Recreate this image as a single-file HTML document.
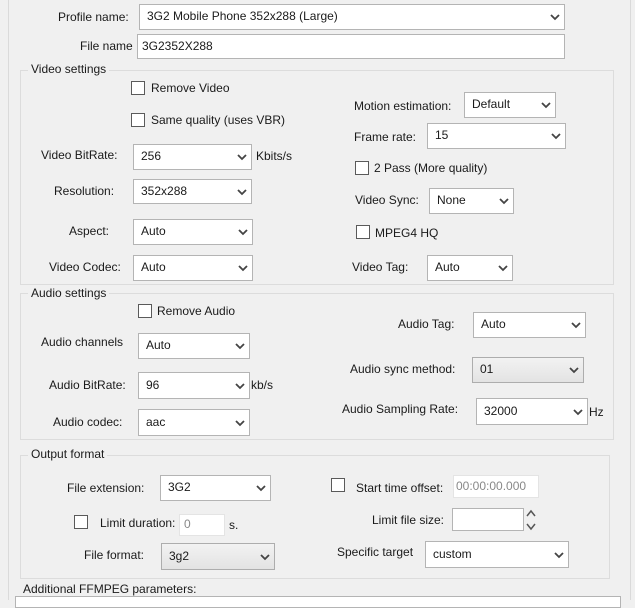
<!DOCTYPE html>
<html><head><style>
body{margin:0;width:635px;height:600px;background:#f0f0f0;font-family:"Liberation Sans",sans-serif;font-size:12px;color:#1a1a1a;position:relative;overflow:hidden}
.a{position:absolute;white-space:nowrap;line-height:14px}
.dd,.in{position:absolute;background:#fff;border:1px solid #b4b4b4;box-sizing:border-box;line-height:14px}
.dd span,.in span{position:absolute;left:7px;top:50%;margin-top:-8px}
.dd svg{position:absolute;right:4px;top:50%;margin-top:-3px}
.g{background:linear-gradient(#f2f2f2,#e3e3e3);border-color:#adadad}
.cb{position:absolute;width:14px;height:14px;border:1px solid #5a5a5a;background:#fff;box-sizing:border-box}
.box{position:absolute;border:1px solid #dcdcdc;box-sizing:border-box}
.lab{position:absolute;background:#f0f0f0;padding:0 3px;line-height:14px}
</style></head><body>
<div style="position:absolute;left:8px;top:0;width:621px;height:600px;border-left:1px solid #dadada;border-right:1px solid #dadada"></div>

<div class="a" style="left:58px;top:10px">Profile name:</div>
<div class="dd" style="left:139px;top:4px;width:426px;height:26px"><span>3G2 Mobile Phone 352x288 (Large)</span><svg width="10" height="7"><path d="M1 1L5 5L9 1" stroke="#444" stroke-width="1.8" fill="none"/></svg></div>
<div class="a" style="left:80px;top:39px">File name</div>
<div class="in" style="left:137px;top:34px;width:428px;height:25px"><span style="left:4px">3G2352X288</span></div>

<div class="box" style="left:20px;top:70px;width:594px;height:215px"></div>
<div class="lab" style="left:28px;top:62px">Video settings</div>
<div class="cb" style="left:131px;top:81px"></div><div class="a" style="left:151px;top:81px">Remove Video</div>
<div class="cb" style="left:131px;top:113px"></div><div class="a" style="left:151px;top:113px">Same quality (uses VBR)</div>
<div class="a" style="left:41px;top:148px">Video BitRate:</div>
<div class="dd" style="left:133px;top:144px;width:119px;height:26px"><span>256</span><svg width="10" height="7"><path d="M1 1L5 5L9 1" stroke="#444" stroke-width="1.8" fill="none"/></svg></div>
<div class="a" style="left:256px;top:149px">Kbits/s</div>
<div class="a" style="left:54px;top:184px">Resolution:</div>
<div class="dd" style="left:133px;top:179px;width:119px;height:25px"><span>352x288</span><svg width="10" height="7"><path d="M1 1L5 5L9 1" stroke="#444" stroke-width="1.8" fill="none"/></svg></div>
<div class="a" style="left:69px;top:224px">Aspect:</div>
<div class="dd" style="left:133px;top:219px;width:120px;height:26px"><span>Auto</span><svg width="10" height="7"><path d="M1 1L5 5L9 1" stroke="#444" stroke-width="1.8" fill="none"/></svg></div>
<div class="a" style="left:49px;top:260px">Video Codec:</div>
<div class="dd" style="left:133px;top:255px;width:120px;height:26px"><span>Auto</span><svg width="10" height="7"><path d="M1 1L5 5L9 1" stroke="#444" stroke-width="1.8" fill="none"/></svg></div>

<div class="a" style="left:354px;top:99px">Motion estimation:</div>
<div class="dd" style="left:464px;top:92px;width:92px;height:26px"><span>Default</span><svg width="10" height="7"><path d="M1 1L5 5L9 1" stroke="#444" stroke-width="1.8" fill="none"/></svg></div>
<div class="a" style="left:354px;top:130px">Frame rate:</div>
<div class="dd" style="left:427px;top:123px;width:139px;height:26px"><span>15</span><svg width="10" height="7"><path d="M1 1L5 5L9 1" stroke="#444" stroke-width="1.8" fill="none"/></svg></div>
<div class="cb" style="left:355px;top:161px"></div><div class="a" style="left:374px;top:161px">2 Pass (More quality)</div>
<div class="a" style="left:355px;top:193px">Video Sync:</div>
<div class="dd" style="left:429px;top:188px;width:85px;height:26px"><span>None</span><svg width="10" height="7"><path d="M1 1L5 5L9 1" stroke="#444" stroke-width="1.8" fill="none"/></svg></div>
<div class="cb" style="left:356px;top:225px"></div><div class="a" style="left:375px;top:226px">MPEG4 HQ</div>
<div class="a" style="left:352px;top:260px">Video Tag:</div>
<div class="dd" style="left:427px;top:255px;width:86px;height:26px"><span>Auto</span><svg width="10" height="7"><path d="M1 1L5 5L9 1" stroke="#444" stroke-width="1.8" fill="none"/></svg></div>

<div class="box" style="left:20px;top:293px;width:594px;height:147px"></div>
<div class="lab" style="left:28px;top:286px">Audio settings</div>
<div class="cb" style="left:138px;top:304px"></div><div class="a" style="left:157px;top:304px">Remove Audio</div>
<div class="a" style="left:41px;top:335px">Audio channels</div>
<div class="dd" style="left:138px;top:333px;width:112px;height:26px"><span>Auto</span><svg width="10" height="7"><path d="M1 1L5 5L9 1" stroke="#444" stroke-width="1.8" fill="none"/></svg></div>
<div class="a" style="left:49px;top:378px">Audio BitRate:</div>
<div class="dd" style="left:138px;top:372px;width:112px;height:27px"><span>96</span><svg width="10" height="7"><path d="M1 1L5 5L9 1" stroke="#444" stroke-width="1.8" fill="none"/></svg></div>
<div class="a" style="left:251px;top:378px">kb/s</div>
<div class="a" style="left:53px;top:415px">Audio codec:</div>
<div class="dd" style="left:138px;top:409px;width:112px;height:27px"><span>aac</span><svg width="10" height="7"><path d="M1 1L5 5L9 1" stroke="#444" stroke-width="1.8" fill="none"/></svg></div>
<div class="a" style="left:398px;top:317px">Audio Tag:</div>
<div class="dd" style="left:473px;top:312px;width:113px;height:26px"><span>Auto</span><svg width="10" height="7"><path d="M1 1L5 5L9 1" stroke="#444" stroke-width="1.8" fill="none"/></svg></div>
<div class="a" style="left:350px;top:362px">Audio sync method:</div>
<div class="dd g" style="left:472px;top:357px;width:112px;height:26px"><span>01</span><svg width="10" height="7"><path d="M1 1L5 5L9 1" stroke="#444" stroke-width="1.8" fill="none"/></svg></div>
<div class="a" style="left:342px;top:402px">Audio Sampling Rate:</div>
<div class="dd" style="left:476px;top:398px;width:112px;height:27px"><span>32000</span><svg width="10" height="7"><path d="M1 1L5 5L9 1" stroke="#444" stroke-width="1.8" fill="none"/></svg></div>
<div class="a" style="left:589px;top:405px">Hz</div>

<div class="box" style="left:20px;top:455px;width:590px;height:124px"></div>
<div class="lab" style="left:28px;top:447px">Output format</div>
<div class="a" style="left:67px;top:481px">File extension:</div>
<div class="dd" style="left:160px;top:475px;width:111px;height:26px"><span>3G2</span><svg width="10" height="7"><path d="M1 1L5 5L9 1" stroke="#444" stroke-width="1.8" fill="none"/></svg></div>
<div class="cb" style="left:74px;top:515px"></div><div class="a" style="left:100px;top:516px">Limit duration:</div>
<div class="in" style="left:179px;top:514px;width:46px;height:22px;border-color:#e4e4e4"><span style="left:4px;color:#888">0</span></div>
<div class="a" style="left:229px;top:518px">s.</div>
<div class="a" style="left:84px;top:548px">File format:</div>
<div class="dd g" style="left:161px;top:543px;width:114px;height:27px"><span>3g2</span><svg width="10" height="7"><path d="M1 1L5 5L9 1" stroke="#444" stroke-width="1.8" fill="none"/></svg></div>
<div class="cb" style="left:331px;top:478px"></div><div class="a" style="left:356px;top:481px">Start time offset:</div>
<div class="in" style="left:453px;top:475px;width:86px;height:23px;border-color:#e4e4e4"><span style="left:2px;color:#888">00:00:00.000</span></div>
<div class="a" style="left:372px;top:513px">Limit file size:</div>
<div class="in" style="left:452px;top:508px;width:72px;height:23px"></div>
<svg style="position:absolute;left:525px;top:508px" width="12" height="24"><path d="M2 8L6 3L10 8M2 16L6 21L10 16" stroke="#555" stroke-width="1.5" fill="none"/></svg>
<div class="a" style="left:337px;top:545px">Specific target</div>
<div class="dd" style="left:425px;top:541px;width:144px;height:27px"><span>custom</span><svg width="10" height="7"><path d="M1 1L5 5L9 1" stroke="#444" stroke-width="1.8" fill="none"/></svg></div>

<div class="a" style="left:23px;top:582px">Additional FFMPEG parameters:</div>
<div style="position:absolute;left:15px;top:596px;width:604px;height:10px;background:#fff;border:1px solid #b4b4b4"></div>
</body></html>
